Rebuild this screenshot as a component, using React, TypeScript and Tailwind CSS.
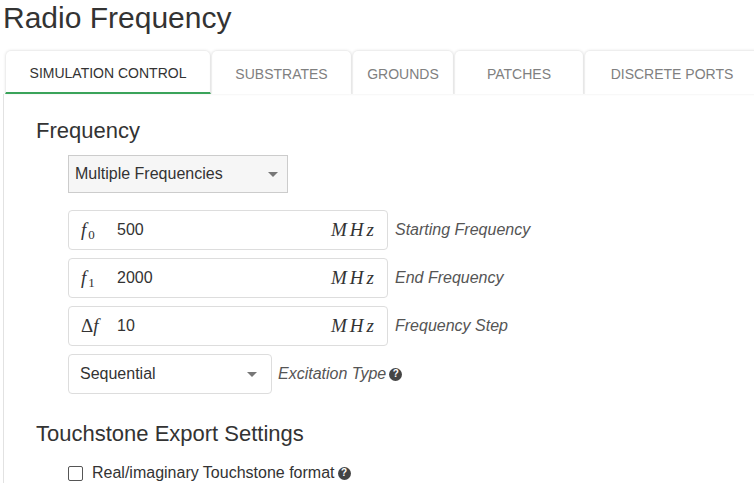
const tabs = [
  { label: "SIMULATION CONTROL", w: "w-[206px]", active: true },
  { label: "SUBSTRATES", w: "w-[141px]" },
  { label: "GROUNDS", w: "w-[102px]" },
  { label: "PATCHES", w: "w-[130px]" },
  { label: "DISCRETE PORTS", w: "w-[176px]" },
];

const Help = () => (
  <span className="inline-flex items-center justify-center w-[13px] h-[13px] rounded-full bg-[#444] text-white text-[10px] font-bold leading-none ml-[3px]">
    ?
  </span>
);

const Caret = () => (
  <svg width="10" height="5" viewBox="0 0 10 5" className="fill-[#777]">
    <path d="M0 0h10L5 5z" />
  </svg>
);

const Symbol = ({ sub, delta }: { sub?: string; delta?: boolean }) => (
  <span className="w-[34px] font-['Liberation_Serif',serif] text-[19px] text-[#333]">
    {delta ? <span className="not-italic">Δ</span> : null}
    <i className="pr-[2px]">f</i>
    {sub ? <sub className="text-[13px] not-italic">{sub}</sub> : null}
  </span>
);

const FreqRow = ({ sub, delta, value, label }: { sub?: string; delta?: boolean; value: string; label: string }) => (
  <div className="flex items-center">
    <div className="flex items-center w-[320px] h-[40px] border border-[#ddd] rounded-[4px] pl-[12px] pr-[10px]">
      <Symbol sub={sub} delta={delta} />
      <span className="ml-[2px] text-[16px] text-[#333] flex-1">{value}</span>
      <span className="font-['Liberation_Serif',serif] italic text-[19px] text-[#333] tracking-[3px]">MHz</span>
    </div>
    <span className="ml-[7px] italic text-[16px] text-[#555]">{label}</span>
  </div>
);

export default function App() {
  return (
    <div className="font-['Liberation_Sans',Arial,sans-serif] text-[#333] bg-white w-[754px] h-[483px] overflow-hidden">
      <h1 className="text-[30px] leading-none pl-[3px] pt-[3px]">Radio Frequency</h1>
      <div className="flex ml-[5px] mt-[17px]">
        {tabs.map((t) => (
          <div
            key={t.label}
            className={`${t.w} shrink-0 h-[44px] pt-[3px] flex items-center justify-center text-[14px] rounded-t-[6px] border border-[#eee] border-b-0 shadow-[0_0_3px_rgba(0,0,0,0.08)] ${
              t.active ? "text-[#333] border-b-2 border-b-[#3aa35a]" : "text-[#808080]"
            }`}
          >
            {t.label}
          </div>
        ))}
      </div>
      <div className="ml-[3px] border-l border-[#e2e2e2] pl-[32px] pt-[26px] h-[400px]">
        <h2 className="text-[22px] leading-none">Frequency</h2>
        <div className="ml-[32px] mt-[13px] flex flex-col gap-[8px]">
          <div className="mb-[9px] flex items-center justify-between w-[220px] h-[38px] bg-[#f6f6f6] border border-[#ccc] pl-[6px] pr-[9px] text-[16px]">
            <span>Multiple Frequencies</span>
            <Caret />
          </div>
          <FreqRow sub="0" value="500" label="Starting Frequency" />
          <FreqRow sub="1" value="2000" label="End Frequency" />
          <FreqRow delta value="10" label="Frequency Step" />
          <div className="flex items-center">
            <div className="flex items-center justify-between w-[204px] h-[40px] border border-[#ddd] rounded-[4px] pl-[11px] pr-[14px] text-[16px]">
              <span>Sequential</span>
              <Caret />
            </div>
            <span className="ml-[6px] italic text-[16px] text-[#555]">Excitation Type</span>
            <Help />
          </div>
        </div>
        <h2 className="text-[22px] leading-none mt-[29px]">Touchstone Export Settings</h2>
        <label className="ml-[32px] mt-[16px] flex items-center text-[16px]">
          <span className="w-[15px] h-[15px] border-[1.5px] border-[#555] rounded-[2px] mr-[9px]" />
          Real/imaginary Touchstone format
          <Help />
        </label>
      </div>
    </div>
  );
}
